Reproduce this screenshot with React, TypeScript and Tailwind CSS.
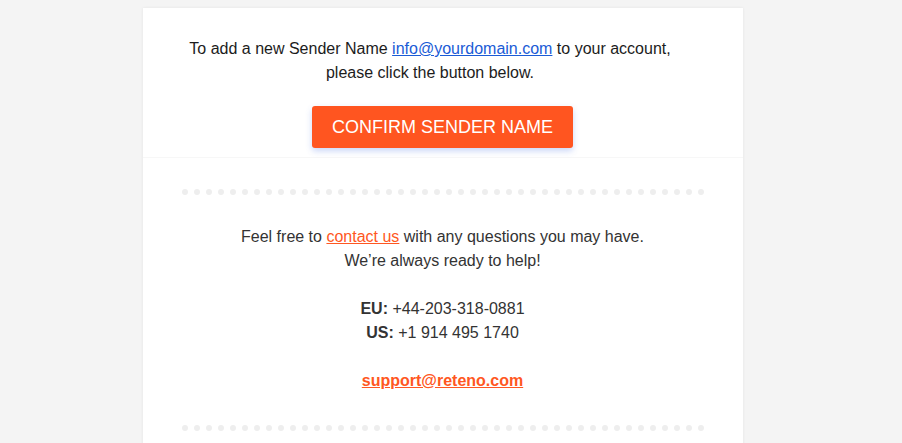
const dots = Array.from({ length: 44 }, (_, i) => i);

function DotRow() {
  return (
    <div className="flex justify-center gap-[6px]">
      {dots.map((d) => (
        <span key={d} className="h-[6px] w-[6px] rounded-full bg-[#eeeeee]" />
      ))}
    </div>
  );
}

export default function App() {
  return (
    <main
      className="min-h-screen bg-[#f4f4f4] pt-2"
      style={{ fontFamily: '"Liberation Sans", Arial, sans-serif' }}
    >
      {/* reference viewport had a scrollbar, so the email column is centred on 885px */}
      <div className="w-[885px]">
        <div className="mx-auto w-[600px] bg-white shadow-[0_0_3px_rgba(0,0,0,0.07)]">
          <section className="flex flex-col items-center border-b border-[#f7f7f7] pt-[29px] pb-[9px] text-center text-[16px] leading-6 text-[#1c1c1c]">
            <p className="pr-[25px]">
              To add a new Sender Name{" "}
              <a href="#" className="text-[#1a5bd6] underline">
                info@yourdomain.com
              </a>{" "}
              to your account,
              <br />
              please click the button below.
            </p>
            <a
              href="#"
              className="mt-[21px] flex h-[42px] w-[261px] items-center justify-center rounded-[3px] bg-[#ff5520] text-[18px] text-white shadow-[0_3px_6px_rgba(80,120,230,0.3)]"
            >
              CONFIRM SENDER NAME
            </a>
          </section>
          <section className="pt-[31px] pb-4 text-center text-[16px] leading-6 text-[#333]">
            <DotRow />
            <div className="mt-[30px]">
              <p>
                Feel free to{" "}
                <a href="#" className="text-[#ff5722] underline">
                  contact us
                </a>{" "}
                with any questions you may have.
                <br />
                We’re always ready to help!
              </p>
              <p className="mt-6">
                <b>EU:</b> +44-203-318-0881
                <br />
                <b>US:</b> +1 914 495 1740
              </p>
              <p className="mt-6">
                <a href="#" className="font-bold text-[#ff5722] underline">
                  support@reteno.com
                </a>
              </p>
            </div>
            <div className="mt-[32px]">
              <DotRow />
            </div>
          </section>
        </div>
      </div>
    </main>
  );
}
